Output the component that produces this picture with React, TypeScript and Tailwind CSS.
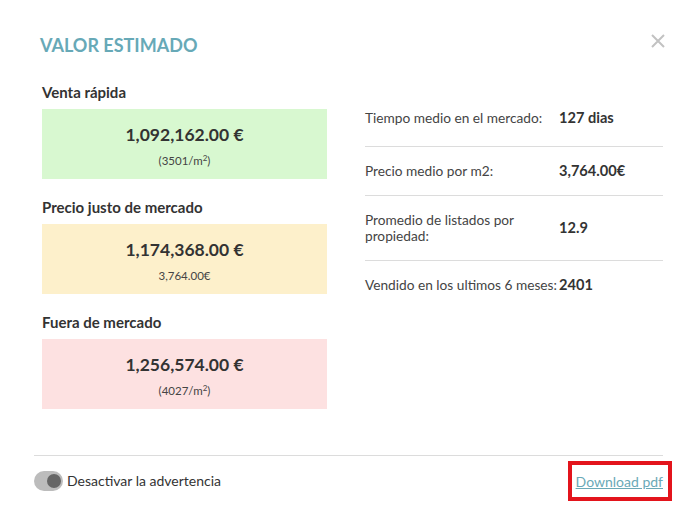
import React from 'react';

interface Estimate {
  label: string;
  value: string;
  sub: React.ReactNode;
  bg: string;
}

const estimates: Estimate[] = [
  {
    label: 'Venta rápida',
    value: '1,092,162.00 €',
    sub: (
      <>
        (3501/m<sup className="text-[8px]">2</sup>)
      </>
    ),
    bg: 'bg-[#d8f8d0]',
  },
  {
    label: 'Precio justo de mercado',
    value: '1,174,368.00 €',
    sub: '3,764.00€',
    bg: 'bg-[#fdf0cb]',
  },
  {
    label: 'Fuera de mercado',
    value: '1,256,574.00 €',
    sub: (
      <>
        (4027/m<sup className="text-[8px]">2</sup>)
      </>
    ),
    bg: 'bg-[#fde1e1]',
  },
];

const stats = [
  { label: 'Tiempo medio en el mercado:', value: '127 dias' },
  { label: 'Precio medio por m2:', value: '3,764.00€' },
  { label: 'Promedio de listados por propiedad:', value: '12.9' },
  { label: 'Vendido en los ultimos 6 meses:', value: '2401' },
];

export default function App() {
  return (
    <div className="relative h-[525px] w-[698px] bg-white font-['Lato','Open_Sans',sans-serif] text-[#333]">
      {/* Header */}
      <div className="flex items-start justify-between pl-[40px] pr-[33px] pt-[34px]">
        <h2 className="text-[18px] font-bold leading-[23px] text-[#67a9b7]">VALOR ESTIMADO</h2>
        <button className="text-[#c2c2c2]" aria-label="Cerrar">
          <svg width="14" height="14" viewBox="0 0 14 14" fill="none" stroke="currentColor" strokeWidth="2">
            <path d="M1 1l12 12M13 1L1 13" />
          </svg>
        </button>
      </div>

      {/* Body */}
      <div className="mt-[25px] flex pl-[42px]">
        <div className="flex w-[285px] flex-col">
          {estimates.map((e, i) => (
            <div key={e.label} className={i > 0 ? 'mt-[18px]' : ''}>
              <p className="text-[15px] font-bold leading-5 text-[#333]">{e.label}</p>
              <div className={`mt-[7px] flex h-[70px] flex-col items-center justify-center gap-[6px] pt-[3px] ${e.bg}`}>
                <span className="text-[17.5px] font-bold leading-6 text-[#333]">{e.value}</span>
                <span className="text-[11.5px] leading-4 text-[#444]">{e.sub}</span>
              </div>
            </div>
          ))}
        </div>

        <div className="ml-[38px] w-[298px] pt-[28px]">
          {stats.map((s, i) => (
            <div
              key={s.label}
              className={`grid grid-cols-[194px_1fr] items-center ${
                i === 0 ? 'pb-[20px]' : 'border-t border-[#dcdcdc] py-4'
              }`}
            >
              <span className="text-[13.7px] leading-4 text-[#444]">{s.label}</span>
              <span className="whitespace-nowrap text-[14.6px] font-bold leading-4 text-[#333]">{s.value}</span>
            </div>
          ))}
        </div>
      </div>

      {/* Footer */}
      <div className="absolute left-[34px] right-[35px] top-[455px] border-t border-[#dcdcdc] pt-[13px]">
        <div className="flex items-center justify-between">
          <label className="flex items-center gap-[4px]">
            <span className="flex h-5 w-[29px] items-center justify-end rounded-full bg-[#bcbcbc] px-[2px]">
              <span className="h-[14px] w-[14px] rounded-full bg-[#666]" />
            </span>
            <span className="text-[14px] leading-5 text-[#333]">Desactivar la advertencia</span>
          </label>
          <span className="relative">
            <a href="#" className="text-[14px] leading-5 text-[#6aa9b7] underline">
              Download pdf
            </a>
            <span className="pointer-events-none absolute -bottom-[8px] -left-[8px] -right-[9px] -top-[8px] border-4 border-[#e3141c]" />
          </span>
        </div>
      </div>
    </div>
  );
}
